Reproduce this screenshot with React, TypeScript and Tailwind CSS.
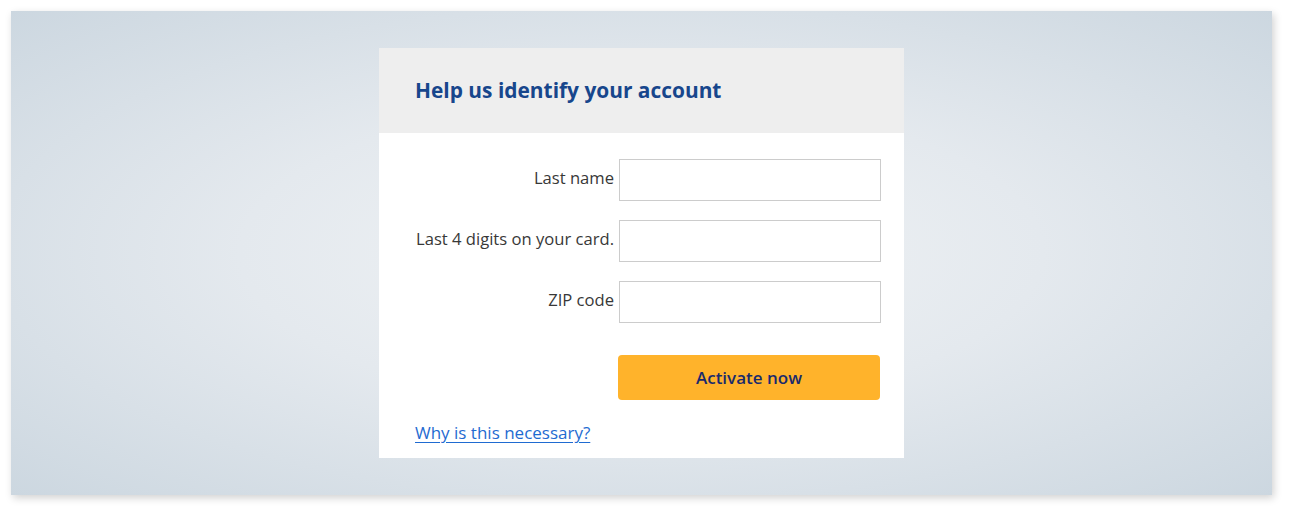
import React from 'react';

const fields = ['Last name', 'Last 4 digits on your card.', 'ZIP code'];

export default function App() {
  return (
    <div className="bg-white pt-[11px] pl-[11px] w-[1292px] h-[512px]" style={{ fontFamily: '"Open Sans", "Noto Sans", sans-serif' }}>
      <div className="w-[1261px] h-[484px] bg-[radial-gradient(ellipse_at_center,#f0f3f5_0%,#e4e9ee_45%,#ccd7e0_100%)] shadow-[2px_3px_8px_rgba(0,0,0,0.18)] flex justify-center pt-[37px]">
        <div className="w-[525px] h-[410px] bg-white flex flex-col">
          <div className="h-[85px] bg-[#eeeeee] flex items-center pl-[36px]">
            <h1 className="text-[20.9px] font-bold text-[#17468c]">Help us identify your account</h1>
          </div>
          <div className="flex flex-col pt-[26px] pl-[30px] pr-[23px]">
            <div className="flex flex-col gap-[19px]">
              {fields.map((f) => (
                <div key={f} className="flex items-center justify-end">
                  <label className="whitespace-nowrap pr-[5px] text-right text-[16.6px] text-[#383838] -mt-[3px]">{f}</label>
                  <input type="text" className="shrink-0 w-[262px] h-[42px] border border-[#cccccc] bg-white outline-none px-2" />
                </div>
              ))}
            </div>
            <div className="flex justify-end mt-[32px] pr-[1px]">
              <button type="button" className="w-[262px] h-[45px] rounded-[4px] bg-[#ffb32b] text-[#1a2a6c] text-[17px] font-semibold">
                Activate now
              </button>
            </div>
            <a href="#" className="mt-[20px] ml-[6px] text-[17px] text-[#1f6bd1] underline underline-offset-[3px] self-start">
              Why is this necessary?
            </a>
          </div>
        </div>
      </div>
    </div>
  );
}
